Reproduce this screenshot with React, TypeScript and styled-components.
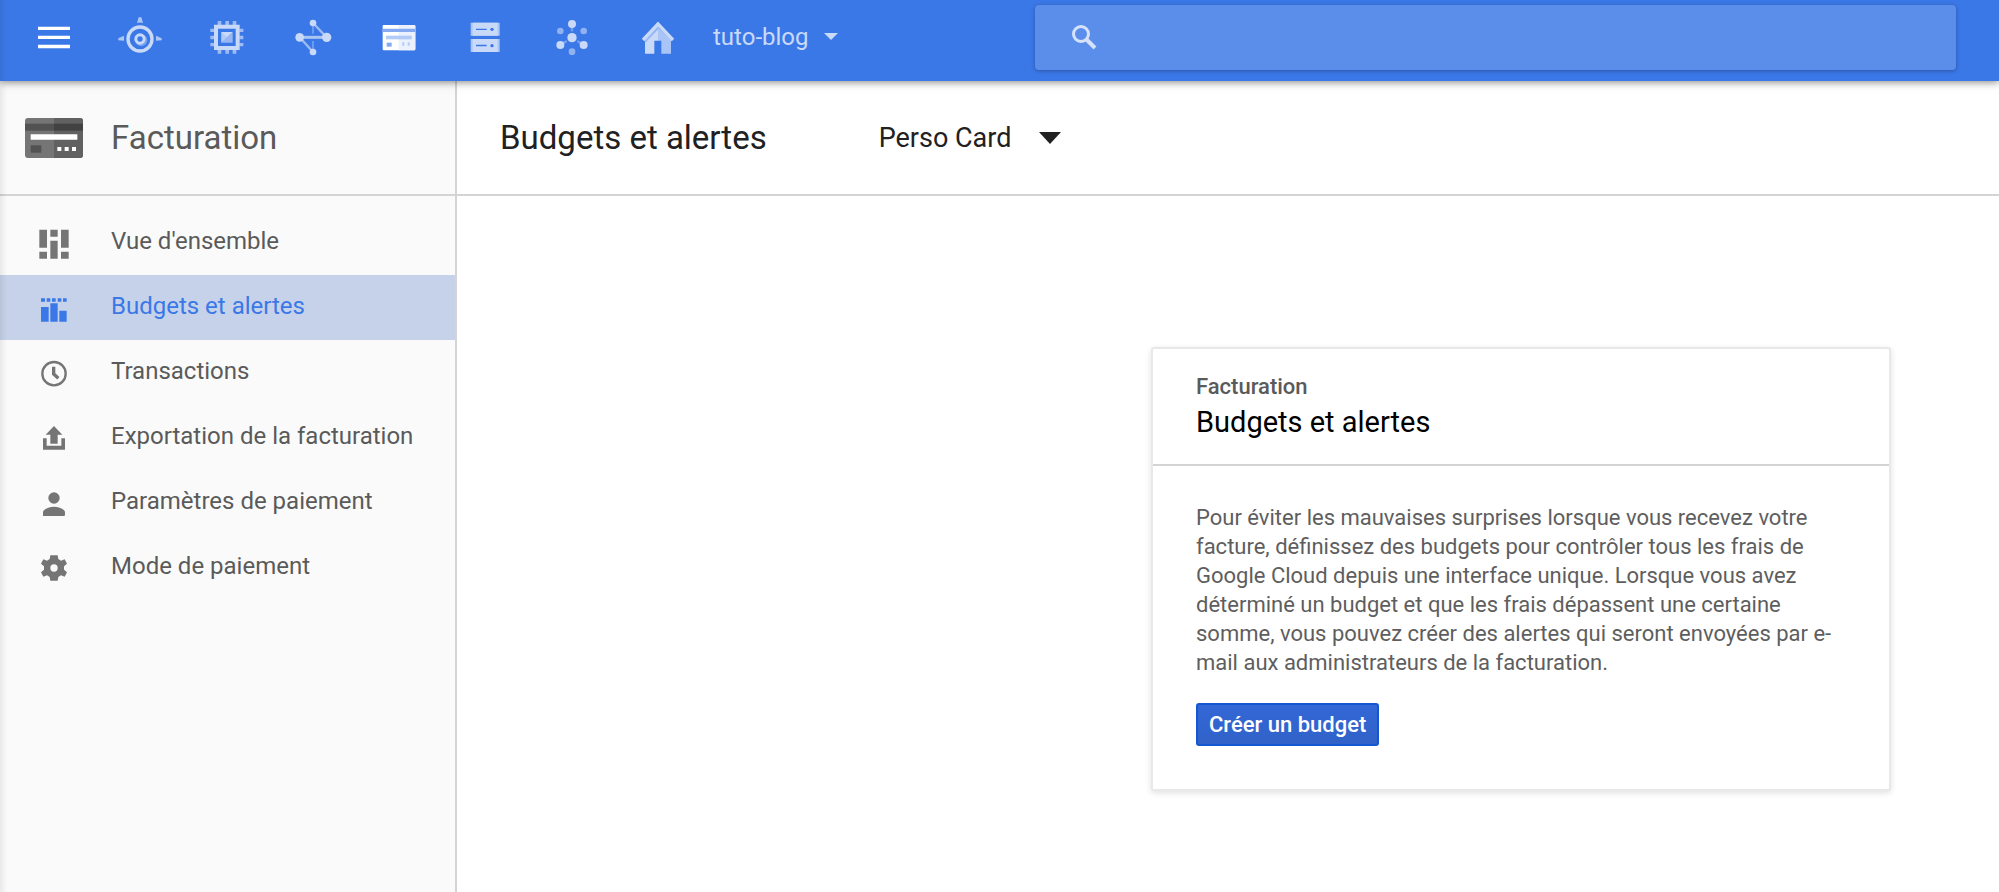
import React from "react";
import styled, { createGlobalStyle } from "styled-components";

const blue = "#3b78e7";
const pale = "#c9d9f8";
const line = "#d4d4d4";

const GlobalStyle = createGlobalStyle`
  *, *::before, *::after { box-sizing: border-box; }
  body {
    margin: 0;
    background: #fff;
    font-family: Roboto, "Liberation Sans", sans-serif;
    color: #212121;
  }
  h1, h2, h3, p, ul { margin: 0; padding: 0; font-weight: 400; }
  ul { list-style: none; }
  svg { display: block; flex: none; }
`;

const Page = styled.div`
  position: relative;
  display: flex;
  flex-direction: column;
  min-height: 100vh;
  &::after {
    content: "";
    position: absolute;
    z-index: 3;
    inset: 0 auto 0 0;
    width: 7px;
    background: linear-gradient(to right, rgba(0, 0, 0, 0.07), rgba(0, 0, 0, 0));
    pointer-events: none;
  }
`;

const TopBar = styled.header`
  position: relative;
  z-index: 2;
  display: flex;
  align-items: center;
  height: 81px;
  padding: 0 43px 0 11px;
  background: ${blue};
  box-shadow: 0 1px 8px rgba(0, 0, 0, 0.5);
`;

const Shortcuts = styled.nav`
  display: grid;
  grid-template-columns: repeat(8, 1fr);
  width: 690px;
`;

const ShortcutButton = styled.button`
  display: flex;
  align-items: center;
  justify-content: center;
  height: 81px;
  padding: 0 0 1px;
  border: 0;
  background: none;
  color: ${pale};
  cursor: pointer;
`;

const Picker = styled.div`
  position: relative;
  display: flex;
  align-items: center;
`;

const PickerSelect = styled.select<{ $size: number; $room: number }>`
  appearance: none;
  margin: 0;
  padding: 0 ${(p) => p.$room}px 0 0;
  border: 0;
  background: none;
  font-family: inherit;
  font-size: ${(p) => p.$size}px;
  line-height: 36px;
  color: inherit;
  cursor: pointer;
`;

const Caret = styled.svg`
  position: absolute;
  right: 0;
  pointer-events: none;
`;

const ProjectPicker = styled(Picker)`
  margin-left: 12px;
  padding-bottom: 8px;
  color: ${pale};
`;

const SearchBox = styled.label`
  display: flex;
  align-items: center;
  gap: 20px;
  width: 48%;
  max-width: 921px;
  height: 65px;
  margin: 0 0 6px auto;
  padding: 0 37px;
  border-radius: 4px;
  background: #5b8dea;
  box-shadow: 0 1px 4px rgba(0, 0, 0, 0.3);
  color: #d6e2fa;
`;

const SearchInput = styled.input`
  flex: 1;
  min-width: 0;
  border: 0;
  outline: 0;
  background: none;
  font: 24px Roboto, sans-serif;
  color: #fff;
`;

const Body = styled.div`
  flex: 1;
  display: grid;
  grid-template-columns: 457px 1fr;
`;

const Sidebar = styled.aside`
  border-right: 2px solid ${line};
  background: #fafafa;
`;

const SectionHead = styled.div`
  display: flex;
  align-items: center;
  gap: 28px;
  height: 115px;
  padding-left: 25px;
  border-bottom: 2px solid ${line};
`;

const SectionTitle = styled.h2`
  font-size: 33px;
  line-height: 40px;
  color: #5a5a5a;
`;

const Menu = styled.ul`
  padding-top: 14px;
`;

const MenuLink = styled.a<{ $active?: boolean }>`
  display: flex;
  align-items: center;
  gap: 37px;
  height: 65px;
  padding: 0 0 1px 34px;
  background: ${(p) => (p.$active ? "#c6d2e9" : "transparent")};
  color: ${(p) => (p.$active ? blue : "#757575")};
  text-decoration: none;
`;

const MenuLabel = styled.span<{ $active?: boolean }>`
  padding-bottom: 2px;
  font-size: 24px;
  line-height: 32px;
  color: ${(p) => (p.$active ? blue : "#5a5a5a")};
`;

const Main = styled.main`
  min-width: 0;
`;

const PageHead = styled.div`
  display: flex;
  align-items: center;
  gap: 112px;
  height: 115px;
  padding-left: 43px;
  border-bottom: 2px solid ${line};
`;

const PageTitle = styled.h1`
  font-size: 33px;
  line-height: 40px;
`;

const Card = styled.section`
  max-width: 740px;
  margin: 151px 108px 0 auto;
  border: 2px solid #e8e8e8;
  border-radius: 3px;
  background: #fff;
  box-shadow: 0 2px 6px rgba(0, 0, 0, 0.12);
`;

const CardHead = styled.div`
  padding: 21px 43px 24px;
  border-bottom: 2px solid ${line};
`;

const CardKicker = styled.h3`
  font-size: 22px;
  font-weight: 500;
  line-height: 34px;
  color: #5a5a5a;
`;

const CardTitle = styled.h2`
  font-size: 29px;
  line-height: 36px;
  color: #000;
`;

const CardBody = styled.div`
  padding: 37px 43px 43px;
`;

const CardText = styled.p`
  margin-bottom: 26px;
  font-size: 22px;
  line-height: 29px;
  color: #5e5e5e;
`;

const PrimaryButton = styled.button`
  height: 43px;
  padding: 0 11px;
  border: 2px solid #1457d2;
  border-radius: 3px;
  background: linear-gradient(#3367d6, #3062c8);
  font-family: inherit;
  font-size: 22px;
  font-weight: 500;
  line-height: 26px;
  color: #fff;
  cursor: pointer;
`;

type IconProps = { box: string; children: React.ReactNode };
const Icon = ({ box, children }: IconProps) => (
  <svg width="40" height="40" viewBox={box} fill="currentColor" aria-hidden="true" overflow="visible">
    {children}
  </svg>
);

const shortcuts: { name: string; icon: React.ReactNode }[] = [
  {
    name: "Menu",
    icon: (
      <Icon box="102 61 120 120">
        <path fill="#fff" d="M114 81h96v10h-96zM114 108h96v10h-96zM114 135h96v11h-96z" />
      </Icon>
    ),
  },
  {
    name: "Explorer",
    icon: (
      <Icon box="361 61 120 120">
        <circle cx="421" cy="118" r="36" fill="none" stroke="currentColor" strokeWidth="10" />
        <circle cx="425" cy="122" r="18" opacity="0.4" />
        <circle cx="421" cy="118" r="17" />
        <circle cx="421" cy="118" r="8" fill={blue} />
        <path opacity="0.8" d="M417 53h8l5 17q-9-3-18 0zM373 108v15l-17-1v-6zM469 108v15l17-1v-6z" />
      </Icon>
    ),
  },
  {
    name: "Compute",
    icon: (
      <Icon box="620 61 120 120">
        <path
          opacity="0.7"
          d="M652 64h11v12h-11zM675 64h11v12h-11zM697 64h11v12h-11zM652 150h11v12h-11zM675 150h11v12h-11zM697 150h11v12h-11zM630 87h12v10h-12zM630 108h12v11h-12zM630 130h12v10h-12zM717 87h12v10h-12zM717 108h12v11h-12zM717 130h12v10h-12z"
        />
        <path fillRule="evenodd" d="M641 75h77v76h-77zM653 87v52h53v-52z" />
        <path d="M663 97h34l-34 32z" />
        <path opacity="0.65" d="M697 97v32h-34z" />
        <path opacity="0.5" d="M663 97v32l17-16z" fill="#9dbaf4" />
      </Icon>
    ),
  },
  {
    name: "Réseau",
    icon: (
      <Icon box="878 61 120 120">
        <path opacity="0.7" fill="none" stroke="currentColor" strokeWidth="7" d="M938 70l41 43M898 113l40 44" />
        <path opacity="0.35" fill="none" stroke="currentColor" strokeWidth="6" d="M938 78v24M938 124v24" />
        <path opacity="0.8" fill="none" stroke="currentColor" strokeWidth="9" d="M898 113h81" />
        <circle cx="938" cy="70" r="10" />
        <circle cx="898" cy="113" r="13" />
        <circle cx="979" cy="113" r="14" />
        <circle cx="938" cy="157" r="10" />
      </Icon>
    ),
  },
  {
    name: "Facturation",
    icon: (
      <Icon box="118 61 120 120">
        <rect x="129" y="76" width="98" height="76" rx="3" fill="#fff" />
        <path fill="#ebf1fd" d="M177 76h47l3 3v70l-3 3h-47z" />
        <path fill="#85aaf1" d="M129 87h98v10h-98z" />
        <path fill="#b3cbf7" d="M139 108h77v11h-77z" />
        <path fill="#85aaf1" d="M141 129h15v12h-15z" />
        <path fill="#b3cbf7" d="M188 128h6v10h-6zM204 128h6v10h-6z" />
      </Icon>
    ),
  },
  {
    name: "Stockage",
    icon: (
      <Icon box="376 61 120 120">
        <path opacity="0.8" d="M393 69h87v39h-87zM393 118h87v39h-87z" />
        <path d="M399 69h75v39h-75zM399 118h75v39h-75z" />
        <path fill={blue} d="M409 87h32v4h-32zM409 135h32v5h-32z" />
        <circle cx="457" cy="89" r="5" fill={blue} />
        <circle cx="457" cy="138" r="5" fill={blue} />
      </Icon>
    ),
  },
  {
    name: "Données",
    icon: (
      <Icon box="635 61 120 120">
        <path opacity="0.4" fill="none" stroke="currentColor" strokeWidth="7" d="M695 114v-41M695 114l-35 22M695 114l35 22" />
        <circle cx="695" cy="114" r="19" fill={blue} />
        <circle cx="695" cy="114" r="14" />
        <circle cx="695" cy="73" r="12" />
        <circle cx="660" cy="136" r="12" />
        <circle cx="730" cy="136" r="12" />
        <g opacity="0.6">
          <circle cx="660" cy="94" r="10" />
          <circle cx="730" cy="94" r="10" />
          <circle cx="695" cy="156" r="10" />
        </g>
      </Icon>
    ),
  },
  {
    name: "Accueil",
    icon: (
      <Icon box="894 61 120 120">
        <path d="M915 121l39-40v42h-11v39h-28z" />
        <path fill="#a9c4f6" d="M954 81l39 40v41h-29v-39h-10z" />
        <path fill="none" stroke="#8fb1f3" strokeWidth="4" d="M915 127l39-41" />
        <path fill="none" stroke="currentColor" strokeWidth="10" d="M909 121l45-48 45 48" />
      </Icon>
    ),
  },
];

const menu: { label: string; active?: boolean; icon: React.ReactNode }[] = [
  {
    label: "Vue d'ensemble",
    icon: (
      <Icon box="102 37 120 120">
        <path d="M118 60h23v54h-23zM118 126h23v21h-23zM151 60h22v21h-22zM151 93h22v54h-22zM183 60h23v54h-23zM183 126h23v21h-23z" />
      </Icon>
    ),
  },
  {
    label: "Budgets et alertes",
    active: true,
    icon: (
      <Icon box="102 232 120 120">
        <path d="M123 266h12v10h-12zM140 266h11v10h-11zM156 266h11v10h-11zM173 266h11v10h-11zM189 266h11v10h-11zM123 292h23v44h-23zM151 281h22v55h-22zM178 303h22v33h-22z" />
      </Icon>
    ),
  },
  {
    label: "Transactions",
    icon: (
      <Icon box="102 427 120 120">
        <circle cx="162" cy="492" r="35" fill="none" stroke="currentColor" strokeWidth="7" />
        <path fill="none" stroke="currentColor" strokeWidth="10" d="M161 471v22l14 13" />
      </Icon>
    ),
  },
  {
    label: "Exportation de la facturation",
    icon: (
      <Icon box="102 52 120 120">
        <path d="M162 79l25 26h-14v27h-22v-27h-14zM129 116h11v22h44v-22h11v34h-66z" />
      </Icon>
    ),
  },
  {
    label: "Paramètres de paiement",
    icon: (
      <Icon box="102 247 120 120">
        <circle cx="162" cy="295" r="17" />
        <path d="M129 349v-11c0-9 17-17 33-17s33 8 33 17v7q0 4-4 4z" />
      </Icon>
    ),
  },
  {
    label: "Mode de paiement",
    icon: (
      <Icon box="102 442 120 120">
        <g transform="translate(162 505)">
          <path
            fillRule="evenodd"
            d="M-11-38h22l2 11 8 5 11-4 7 13-9 8v10l9 8-7 13-11-4-8 5-2 11h-22l-2-11-8-5-11 4-7-13 9-8v-10l-9-8 7-13 11 4 8-5zM0-11a11 11 0 1 0 0 22a11 11 0 1 0 0-22z"
          />
        </g>
      </Icon>
    ),
  },
];

const BillingIcon = () => (
  <svg width="58" height="40" viewBox="75 355 174 120" aria-hidden="true">
    <rect x="75" y="355" width="174" height="120" rx="9" fill="#757575" />
    <path fill="#616161" d="M162 355h78q9 0 9 9v102q0 9-9 9h-78z" />
    <path fill="#525252" d="M75 372h87v21h-87z" />
    <path fill="#424242" d="M162 372h87v21h-87z" />
    <path fill="#fff" d="M92 404h140v16h-140zM172 442h12v12h-12zM194 442h12v12h-12zM216 442h12v12h-12z" />
    <path fill="#525252" d="M92 437h32v22h-32z" />
  </svg>
);

export default function App() {
  return (
    <>
      <GlobalStyle />
      <Page>
        <TopBar>
          <Shortcuts aria-label="Raccourcis">
            {shortcuts.map((s) => (
              <ShortcutButton key={s.name} type="button" aria-label={s.name}>
                {s.icon}
              </ShortcutButton>
            ))}
          </Shortcuts>
          <ProjectPicker>
            <PickerSelect $size={24} $room={29} aria-label="Projet">
              <option>tuto-blog</option>
            </PickerSelect>
            <Caret width="14" height="7" viewBox="0 0 14 7" fill="currentColor">
              <path d="M0 0h14l-7 7z" />
            </Caret>
          </ProjectPicker>
          <SearchBox>
            <svg width="25" height="25" viewBox="0 0 25 25" fill="none" stroke="currentColor" aria-hidden="true">
              <circle cx="9" cy="9" r="7.5" strokeWidth="3" />
              <path strokeWidth="4" d="M14 14l9 9" />
            </svg>
            <SearchInput type="text" aria-label="Rechercher" />
          </SearchBox>
        </TopBar>
        <Body>
          <Sidebar>
            <SectionHead>
              <BillingIcon />
              <SectionTitle>Facturation</SectionTitle>
            </SectionHead>
            <Menu>
              {menu.map((m) => (
                <li key={m.label}>
                  <MenuLink href="#" $active={m.active}>
                    {m.icon}
                    <MenuLabel $active={m.active}>{m.label}</MenuLabel>
                  </MenuLink>
                </li>
              ))}
            </Menu>
          </Sidebar>
          <Main>
            <PageHead>
              <PageTitle>Budgets et alertes</PageTitle>
              <Picker>
                <PickerSelect $size={27} $room={49} aria-label="Compte de facturation">
                  <option>Perso Card</option>
                </PickerSelect>
                <Caret width="22" height="12" viewBox="0 0 22 12" fill="currentColor">
                  <path d="M0 0h22l-11 12z" />
                </Caret>
              </Picker>
            </PageHead>
            <Card>
              <CardHead>
                <CardKicker>Facturation</CardKicker>
                <CardTitle>Budgets et alertes</CardTitle>
              </CardHead>
              <CardBody>
                <CardText>
                  Pour éviter les mauvaises surprises lorsque vous recevez votre facture, définissez des budgets pour
                  contrôler tous les frais de Google Cloud depuis une interface unique. Lorsque vous avez déterminé un
                  budget et que les frais dépassent une certaine somme, vous pouvez créer des alertes qui seront
                  envoyées par e-mail aux administrateurs de la facturation.
                </CardText>
                <PrimaryButton type="button">Créer un budget</PrimaryButton>
              </CardBody>
            </Card>
          </Main>
        </Body>
      </Page>
    </>
  );
}
